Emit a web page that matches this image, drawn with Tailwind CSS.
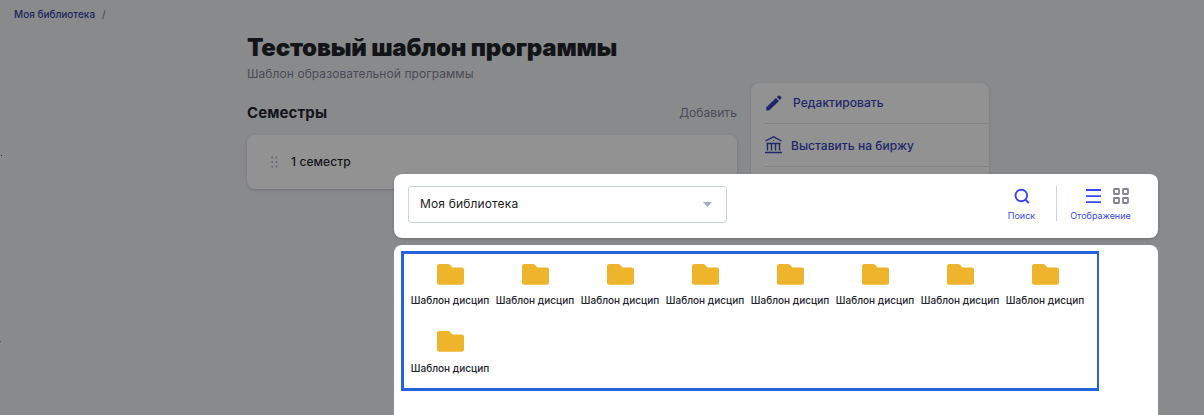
<!DOCTYPE html>
<html lang="ru">
<head>
<meta charset="utf-8">
<title>Тестовый шаблон программы</title>
<script src="https://cdn.jsdelivr.net/npm/@tailwindcss/browser@4"></script>
</head>
<body class="relative h-[415px] w-[1204px] overflow-hidden bg-[#898a8c] font-['Inter','Liberation_Sans',sans-serif] text-[#131418]">
<svg class="hidden">
  <symbol id="folder" viewBox="0 0 27 21"><path d="M2.3 0H11.2Q12 0 12.600.6L15.500 3.400H24.700Q27 3.400 27 5.500V18.500Q27 20.700 24.700 20.700H2.300Q0 20.700 0 18.500V2.300Q0 0 2.300 0Z" fill="#edb42c"/></symbol>
</svg>

<nav class="flex h-7 items-center gap-[7px] pl-[14px] text-[10px] leading-3 font-medium text-[#20255f]">
  <a>Моя библиотека</a><span class="font-normal text-[#3f4048]">/</span>
</nav>
<span class="absolute top-[155px] left-px size-px bg-[#20255f]"></span>
<span class="absolute top-[341px] left-0 size-px bg-[#4a4c70]"></span>

<main class="flex gap-[14px] pt-[2px] pl-[247px]">
  <section class="w-[490px]">
    <h1 class="pt-[2px] text-2xl leading-8 font-black tracking-[-0.23px] whitespace-nowrap">Тестовый шаблон программы</h1>
    <p class="mt-[2px] text-xs leading-4 tracking-[0.07px] text-[#4a4a58]">Шаблон образовательной программы</p>
    <div class="mt-[19px] flex h-6 items-center justify-between">
      <h2 class="text-[15px] leading-6 font-bold tracking-[0.1px]">Семестры</h2>
      <a class="text-xs leading-4 tracking-[0.07px] text-[#4a4a58]">Добавить</a>
    </div>
    <div class="mt-[10px] flex h-[54px] items-center rounded-lg bg-[#929292] pl-6 shadow-[0_1px_3px_rgba(40,40,60,0.25)]">
      <svg class="h-3 w-[7px]" viewBox="0 0 7 12" fill="#626378"><circle cx="1.200" cy="1.500" r=".9"/><circle cx="5.500" cy="1.500" r=".9"/><circle cx="1.200" cy="6" r=".9"/><circle cx="5.500" cy="6" r=".9"/><circle cx="1.200" cy="10.500" r=".9"/><circle cx="5.500" cy="10.500" r=".9"/></svg>
      <span class="ml-[13px] text-xs leading-4 font-medium tracking-[0.1px]">1 семестр</span>
    </div>
  </section>

  <aside class="mt-[53px] h-[140px] w-[238px] rounded-lg bg-[#929292] pl-[13px] text-xs font-medium text-[#20266b] shadow-[0_1px_3px_rgba(40,40,60,0.2)]">
    <div class="flex h-[41px] items-center border-b border-[#838486]">
      <svg class="ml-[2px] size-4" viewBox="0 0 16 16" fill="currentColor"><path d="M.3 12.300 9.900 2.900 13 6 3.400 15.200 1.300 15.600Q0 15.700.2 14.300ZM10.900 2 12.200.8Q13 .1 13.800.8L15.100 2.100Q15.800 3 15.100 3.800L13.900 5Z"/></svg>
      <span class="ml-[11px] tracking-[0.05px]">Редактировать</span>
    </div>
    <div class="flex h-[43px] items-center border-b border-[#838486]">
      <svg class="ml-px h-[18px] w-[17px]" viewBox="0 0 17 18" fill="none" stroke="currentColor" stroke-width="1.400"><path d="M.4 5 8.500.8 16.600 5M1.500 7.500H15.500M2.500 8V14.500M6.500 8V14.500M10.500 8V14.500M14.500 8V14.500M0 16.500H17"/><circle cx="8.500" cy="4.500" r=".6" fill="currentColor" stroke="none"/></svg>
      <span class="mt-[2px] ml-[9px] tracking-[0.05px]">Выставить на биржу</span>
    </div>
  </aside>
</main>

<div role="dialog" class="absolute top-[174px] left-[394px] flex w-[764px] flex-col gap-[7px]">
  <header class="flex h-16 items-start rounded-lg bg-white pt-3 pl-[14px] shadow-[0_1px_3px_rgba(0,0,0,0.2)]">
    <div class="flex h-[37px] w-[319px] items-center justify-between rounded-[3px] border border-[#c8d3da] pr-[14px] pl-[11px]">
      <span class="-mt-[2px] text-xs leading-4 tracking-[0.15px] text-[#1b1c22]">Моя библиотека</span>
      <svg class="-mt-px h-[5px] w-[9px]" viewBox="0 0 9 5"><path d="M0 0H9L4.500 5Z" fill="#a6a8cd"/></svg>
    </div>
    <div class="ml-[280px] flex h-[35px] w-[29px] flex-col items-center text-[#3b46f2]">
      <svg class="mt-[2px] size-4 shrink-0" viewBox="0 0 16 16" fill="none" stroke="currentColor" stroke-width="1.900"><circle cx="7.300" cy="7.500" r="5.800"/><path d="M11.300 11.500 14.800 15"/></svg>
      <span class="mt-[6px] text-[9px] leading-3">Поиск</span>
    </div>
    <div class="ml-5 h-[35px] w-px bg-[#c8d3da]"></div>
    <div class="ml-[13px] flex h-[35px] w-[61px] flex-col items-center text-[#3b46f2]">
      <div class="mt-[2px] flex h-4 shrink-0 items-center gap-3 pl-[13px]">
        <svg class="h-4 w-[15px]" viewBox="0 0 15 16" stroke="currentColor" stroke-width="1.800"><path d="M0 2H15M0 8.200H15M0 14.200H15"/></svg>
        <svg class="size-4" viewBox="0 0 16 16" fill="none" stroke="#858099" stroke-width="1.800"><rect x="1" y="1" width="5" height="5" rx=".5"/><rect x="10" y="1" width="5" height="5" rx=".5"/><rect x="1" y="10" width="5" height="5" rx=".5"/><rect x="10" y="10" width="5" height="5" rx=".5"/></svg>
      </div>
      <span class="mt-[6px] text-[9px] leading-3">Отображение</span>
    </div>
  </header>

  <section class="h-[190px] rounded-t-lg bg-white pt-[6px] pl-[7px]">
    <div class="grid h-[140px] w-[698px] auto-rows-[67px] grid-cols-[repeat(8,85px)] border-[3px] border-r-2 border-[#2563dc] pt-[9px] pl-[4px] text-[10px] leading-3 font-medium text-[#24242e]">
      <div class="flex flex-col items-center"><svg class="mt-px h-[21px] w-[27px]"><use href="#folder"/></svg><span class="mt-[9px] mr-px whitespace-nowrap">Шаблон дисцип</span></div>
      <div class="flex flex-col items-center"><svg class="mt-px h-[21px] w-[27px]"><use href="#folder"/></svg><span class="mt-[9px] mr-px whitespace-nowrap">Шаблон дисцип</span></div>
      <div class="flex flex-col items-center"><svg class="mt-px h-[21px] w-[27px]"><use href="#folder"/></svg><span class="mt-[9px] mr-px whitespace-nowrap">Шаблон дисцип</span></div>
      <div class="flex flex-col items-center"><svg class="mt-px h-[21px] w-[27px]"><use href="#folder"/></svg><span class="mt-[9px] mr-px whitespace-nowrap">Шаблон дисцип</span></div>
      <div class="flex flex-col items-center"><svg class="mt-px h-[21px] w-[27px]"><use href="#folder"/></svg><span class="mt-[9px] mr-px whitespace-nowrap">Шаблон дисцип</span></div>
      <div class="flex flex-col items-center"><svg class="mt-px h-[21px] w-[27px]"><use href="#folder"/></svg><span class="mt-[9px] mr-px whitespace-nowrap">Шаблон дисцип</span></div>
      <div class="flex flex-col items-center"><svg class="mt-px h-[21px] w-[27px]"><use href="#folder"/></svg><span class="mt-[9px] mr-px whitespace-nowrap">Шаблон дисцип</span></div>
      <div class="flex flex-col items-center"><svg class="mt-px h-[21px] w-[27px]"><use href="#folder"/></svg><span class="mt-[9px] mr-px whitespace-nowrap">Шаблон дисцип</span></div>
      <div class="flex flex-col items-center"><svg class="mt-px h-[21px] w-[27px]"><use href="#folder"/></svg><span class="mt-[10px] mr-px whitespace-nowrap">Шаблон дисцип</span></div>
    </div>
  </section>
</div>
</body>
</html>
